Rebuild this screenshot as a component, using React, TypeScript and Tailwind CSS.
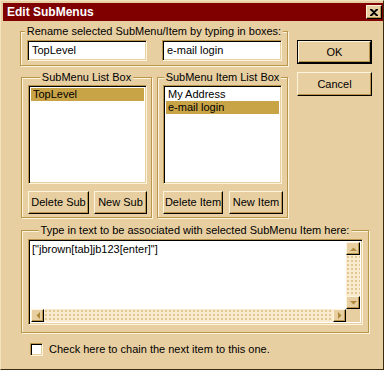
import React from "react";

const raised =
  "border border-t-[#FFF4DC] border-l-[#FFF4DC] border-r-black border-b-black shadow-[inset_-1px_-1px_0_#B8954A] bg-[#E8CFA1]";
const sunken =
  "border border-t-[#B8954A] border-l-[#B8954A] border-r-[#FFF4DC] border-b-[#FFF4DC] shadow-[inset_1px_1px_0_#000,inset_-1px_-1px_0_#E8CFA1] bg-white";
const track =
  "bg-[#F8EBD0] bg-[radial-gradient(#E0C48C_0.7px,transparent_0.8px)] bg-[length:4px_4px]";

function Group({ label, className, children }: { label: string; className: string; children: React.ReactNode }) {
  return (
    <div
      className={`relative border border-[#B8954A] shadow-[inset_1px_1px_0_#FFF4DC,1px_1px_0_#FFF4DC] ${className}`}
    >
      <span className="absolute -top-[7px] left-1/2 -translate-x-1/2 whitespace-nowrap bg-[#E8CFA1] px-[2px]">
        {label}
      </span>
      {children}
    </div>
  );
}

function Button({ label, className }: { label: string; className: string }) {
  return <div className={`${raised} flex items-center justify-center ${className}`}>{label}</div>;
}

function Arrow({ dir }: { dir: "up" | "down" | "left" | "right" }) {
  const pts = {
    up: "0,4 3.5,0.5 7,4",
    down: "0,0 3.5,3.5 7,0",
    left: "4,0 0.5,3.5 4,7",
    right: "0,0 3.5,3.5 0,7",
  }[dir];
  const vertical = dir === "up" || dir === "down";
  return (
    <div className={`${raised} flex items-center justify-center`}>
      <svg width={vertical ? 7 : 4} height={vertical ? 4 : 7} viewBox={vertical ? "0 0 7 4" : "0 0 4 7"}>
        <polygon points={pts} fill="#B08A3C" />
      </svg>
    </div>
  );
}

function ListBox({ items, selected }: { items: string[]; selected: number }) {
  return (
    <div className={`${sunken} w-[119px] h-[99px] p-[2px]`}>
      {items.map((it, i) => (
        <div key={it} className={`h-[13px] pl-[2px] ${i === selected ? "bg-[#C9A447]" : ""}`}>
          {it}
        </div>
      ))}
    </div>
  );
}

export default function App() {
  return (
    <div className="w-[384px] h-[370px] overflow-hidden bg-[#E8CFA1] border border-t-[#F3E2C0] border-l-[#F3E2C0] border-r-[#3B2C10] border-b-[#3B2C10] pt-[2px] pl-[2px] font-['Liberation_Sans',Arial,sans-serif] text-[11px] leading-[13px] text-black">
      <div className="flex items-center h-[18px] bg-[#800000] pl-[4px] pr-[1px]">
        <span className="font-bold text-[12px] leading-[14px] text-white">Edit SubMenus</span>
        <div className={`${raised} ml-auto w-[16px] h-[14px] flex items-center justify-center`}>
          <svg width="8" height="7" viewBox="0 0 8 7">
            <path d="M0 0h2l2 2 2-2h2v1L5 3.5 8 6v1H6L4 5 2 7H0V6l3-2.5L0 1z" fill="#000" />
          </svg>
        </div>
      </div>

      <div className="pl-[17px] pt-[10px]">
        <div className="flex gap-[9px]">
          <div className="w-[268px]">
            <Group label="Rename selected SubMenu/Item by typing in boxes:" className="h-[35px] pl-[6px] pt-[8px] flex gap-[15px]">
              <div className={`${sunken} w-[120px] h-[21px] pl-[4px] pt-[3px]`}>TopLevel</div>
              <div className={`${sunken} w-[120px] h-[21px] pl-[4px] pt-[3px]`}>e-mail login</div>
            </Group>

            <div className="flex gap-[5px] mt-[11px] ml-px">
              <Group label="SubMenu List Box" className="w-[131px] h-[141px] pl-[6px] pt-[7px]">
                <ListBox items={["TopLevel"]} selected={0} />
                <div className="flex gap-[5px] mt-[7px]">
                  <Button label="Delete Sub" className="w-[61px] h-[23px]" />
                  <Button label="New Sub" className="w-[53px] h-[23px]" />
                </div>
              </Group>
              <Group label="SubMenu Item List Box" className="w-[131px] h-[141px] pl-[5px] pt-[7px]">
                <ListBox items={["My Address", "e-mail login"]} selected={1} />
                <div className="flex gap-[6px] mt-[7px]">
                  <Button label="Delete Item" className="w-[60px] h-[23px]" />
                  <Button label="New Item" className="w-[54px] h-[23px]" />
                </div>
              </Group>
            </div>
          </div>

          <div className="flex flex-col gap-[8px] pt-[9px]">
            <div className="border border-black">
              <Button label="OK" className="w-[73px] h-[22px]" />
            </div>
            <Button label="Cancel" className="w-[75px] h-[24px]" />
          </div>
        </div>

        <Group
          label="Type in text to be associated with selected SubMenu Item here:"
          className="w-[348px] h-[103px] mt-[12px] ml-px pl-[6px] pt-[8px]"
        >
          <div className={`${sunken} w-[335px] h-[86px] p-[2px] grid grid-cols-[1fr_14px] grid-rows-[1fr_13px]`}>
            <div className="pl-[1px] pt-[1px]">["jbrown[tab]jb123[enter]"]</div>
            <div className="grid grid-rows-[13px_1fr_13px]">
              <Arrow dir="up" />
              <div className={track} />
              <Arrow dir="down" />
            </div>
            <div className="grid grid-cols-[13px_1fr_13px]">
              <Arrow dir="left" />
              <div className={track} />
              <Arrow dir="right" />
            </div>
            <div className="bg-[#E8CFA1]" />
          </div>
        </Group>

        <div className="flex items-center gap-[6px] mt-[10px] ml-[10px]">
          <div className={`${sunken} w-[13px] h-[13px]`} />
          <span>Check here to chain the next item to this one.</span>
        </div>
      </div>
    </div>
  );
}
